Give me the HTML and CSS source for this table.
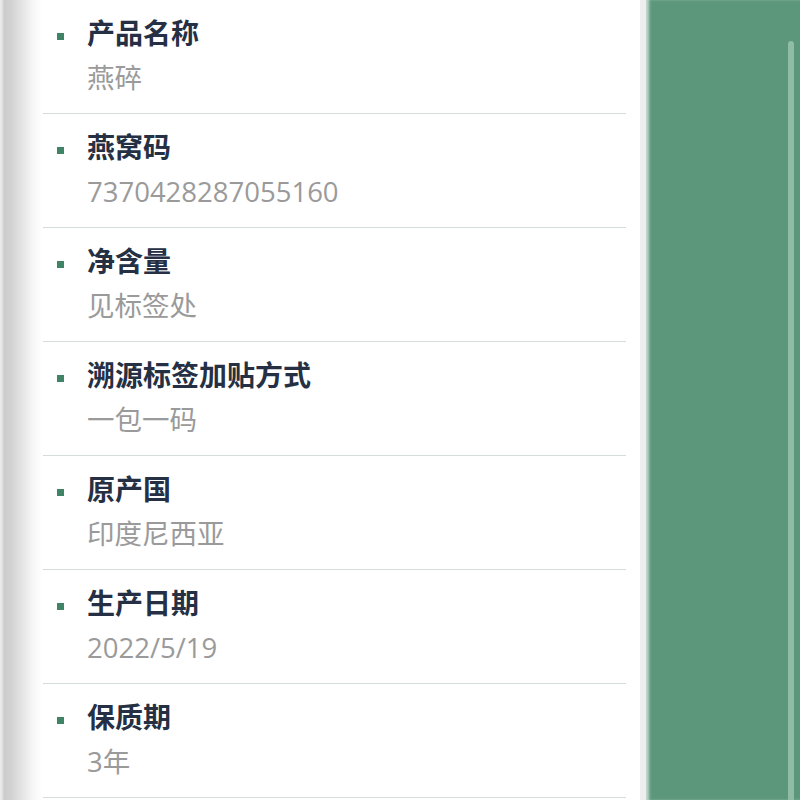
FILE: index.html
```html
<!DOCTYPE html>
<html lang="zh">
<head>
<meta charset="utf-8">
<link rel="stylesheet" href="styles.css">
</head>
<body>
<div class="screen">
  <div class="gutter"></div>
  <div class="panel">
    <ul class="list">
      <li class="item"><div class="title">产品名称</div><div class="value">燕碎</div></li>
      <li class="item"><div class="title">燕窝码</div><div class="value">7370428287055160</div></li>
      <li class="item"><div class="title">净含量</div><div class="value">见标签处</div></li>
      <li class="item"><div class="title">溯源标签加贴方式</div><div class="value">一包一码</div></li>
      <li class="item"><div class="title">原产国</div><div class="value">印度尼西亚</div></li>
      <li class="item"><div class="title">生产日期</div><div class="value">2022/5/19</div></li>
      <li class="item"><div class="title">保质期</div><div class="value">3年</div></li>
    </ul>
  </div>
  <div class="edge"></div>
  <div class="side">
    <div class="scrollbar"></div>
  </div>
</div>
</body>
</html>
```
FILE: styles.css
```css
html, body {
  margin: 0;
  padding: 0;
  background: #fff;
}
.screen {
  display: flex;
  width: 800px;
  height: 800px;
  overflow: hidden;
  font-family: "Noto Sans CJK SC", "Noto Sans", sans-serif;
}
.gutter {
  width: 42px;
  flex: none;
  background: linear-gradient(to right, #ececec 0px, #e4e4e4 2px, #cccccc 4px, #d0d0d0 10px, #e4e4e4 22px, #f5f5f5 32px, #ffffff 42px);
}
.panel {
  width: 598px;
  flex: none;
  background: #fff;
}
.list {
  list-style: none;
  margin: 0 14px 0 1px;
  padding: 0;
}
.item {
  position: relative;
  padding: 12px 0 15px 44px;
  border-bottom: 1px solid #d3ddd9;
}
.item::before {
  content: "";
  position: absolute;
  left: 14px;
  top: 33px;
  width: 7px;
  height: 7px;
  background: #3f8466;
}
.title {
  font-size: 28px;
  line-height: 40px;
  font-weight: 700;
  color: #253044;
}
.value {
  margin-top: 6px;
  font-family: "Open Sans", "Noto Sans CJK SC", sans-serif;
  font-size: 27.5px;
  line-height: 40px;
  color: #9a9a9a;
}
.edge {
  width: 6px;
  flex: none;
  background: #eeeeee;
}
.side {
  position: relative;
  flex: 1;
  background: #5c977c;
  box-shadow: inset 4px 0 3px -1px rgba(235, 245, 240, 0.7);
}
.scrollbar {
  position: absolute;
  left: 142px;
  top: 41px;
  width: 6px;
  height: 780px;
  border-radius: 3px 3px 0 0;
  background: #8fbca7;
}
```
